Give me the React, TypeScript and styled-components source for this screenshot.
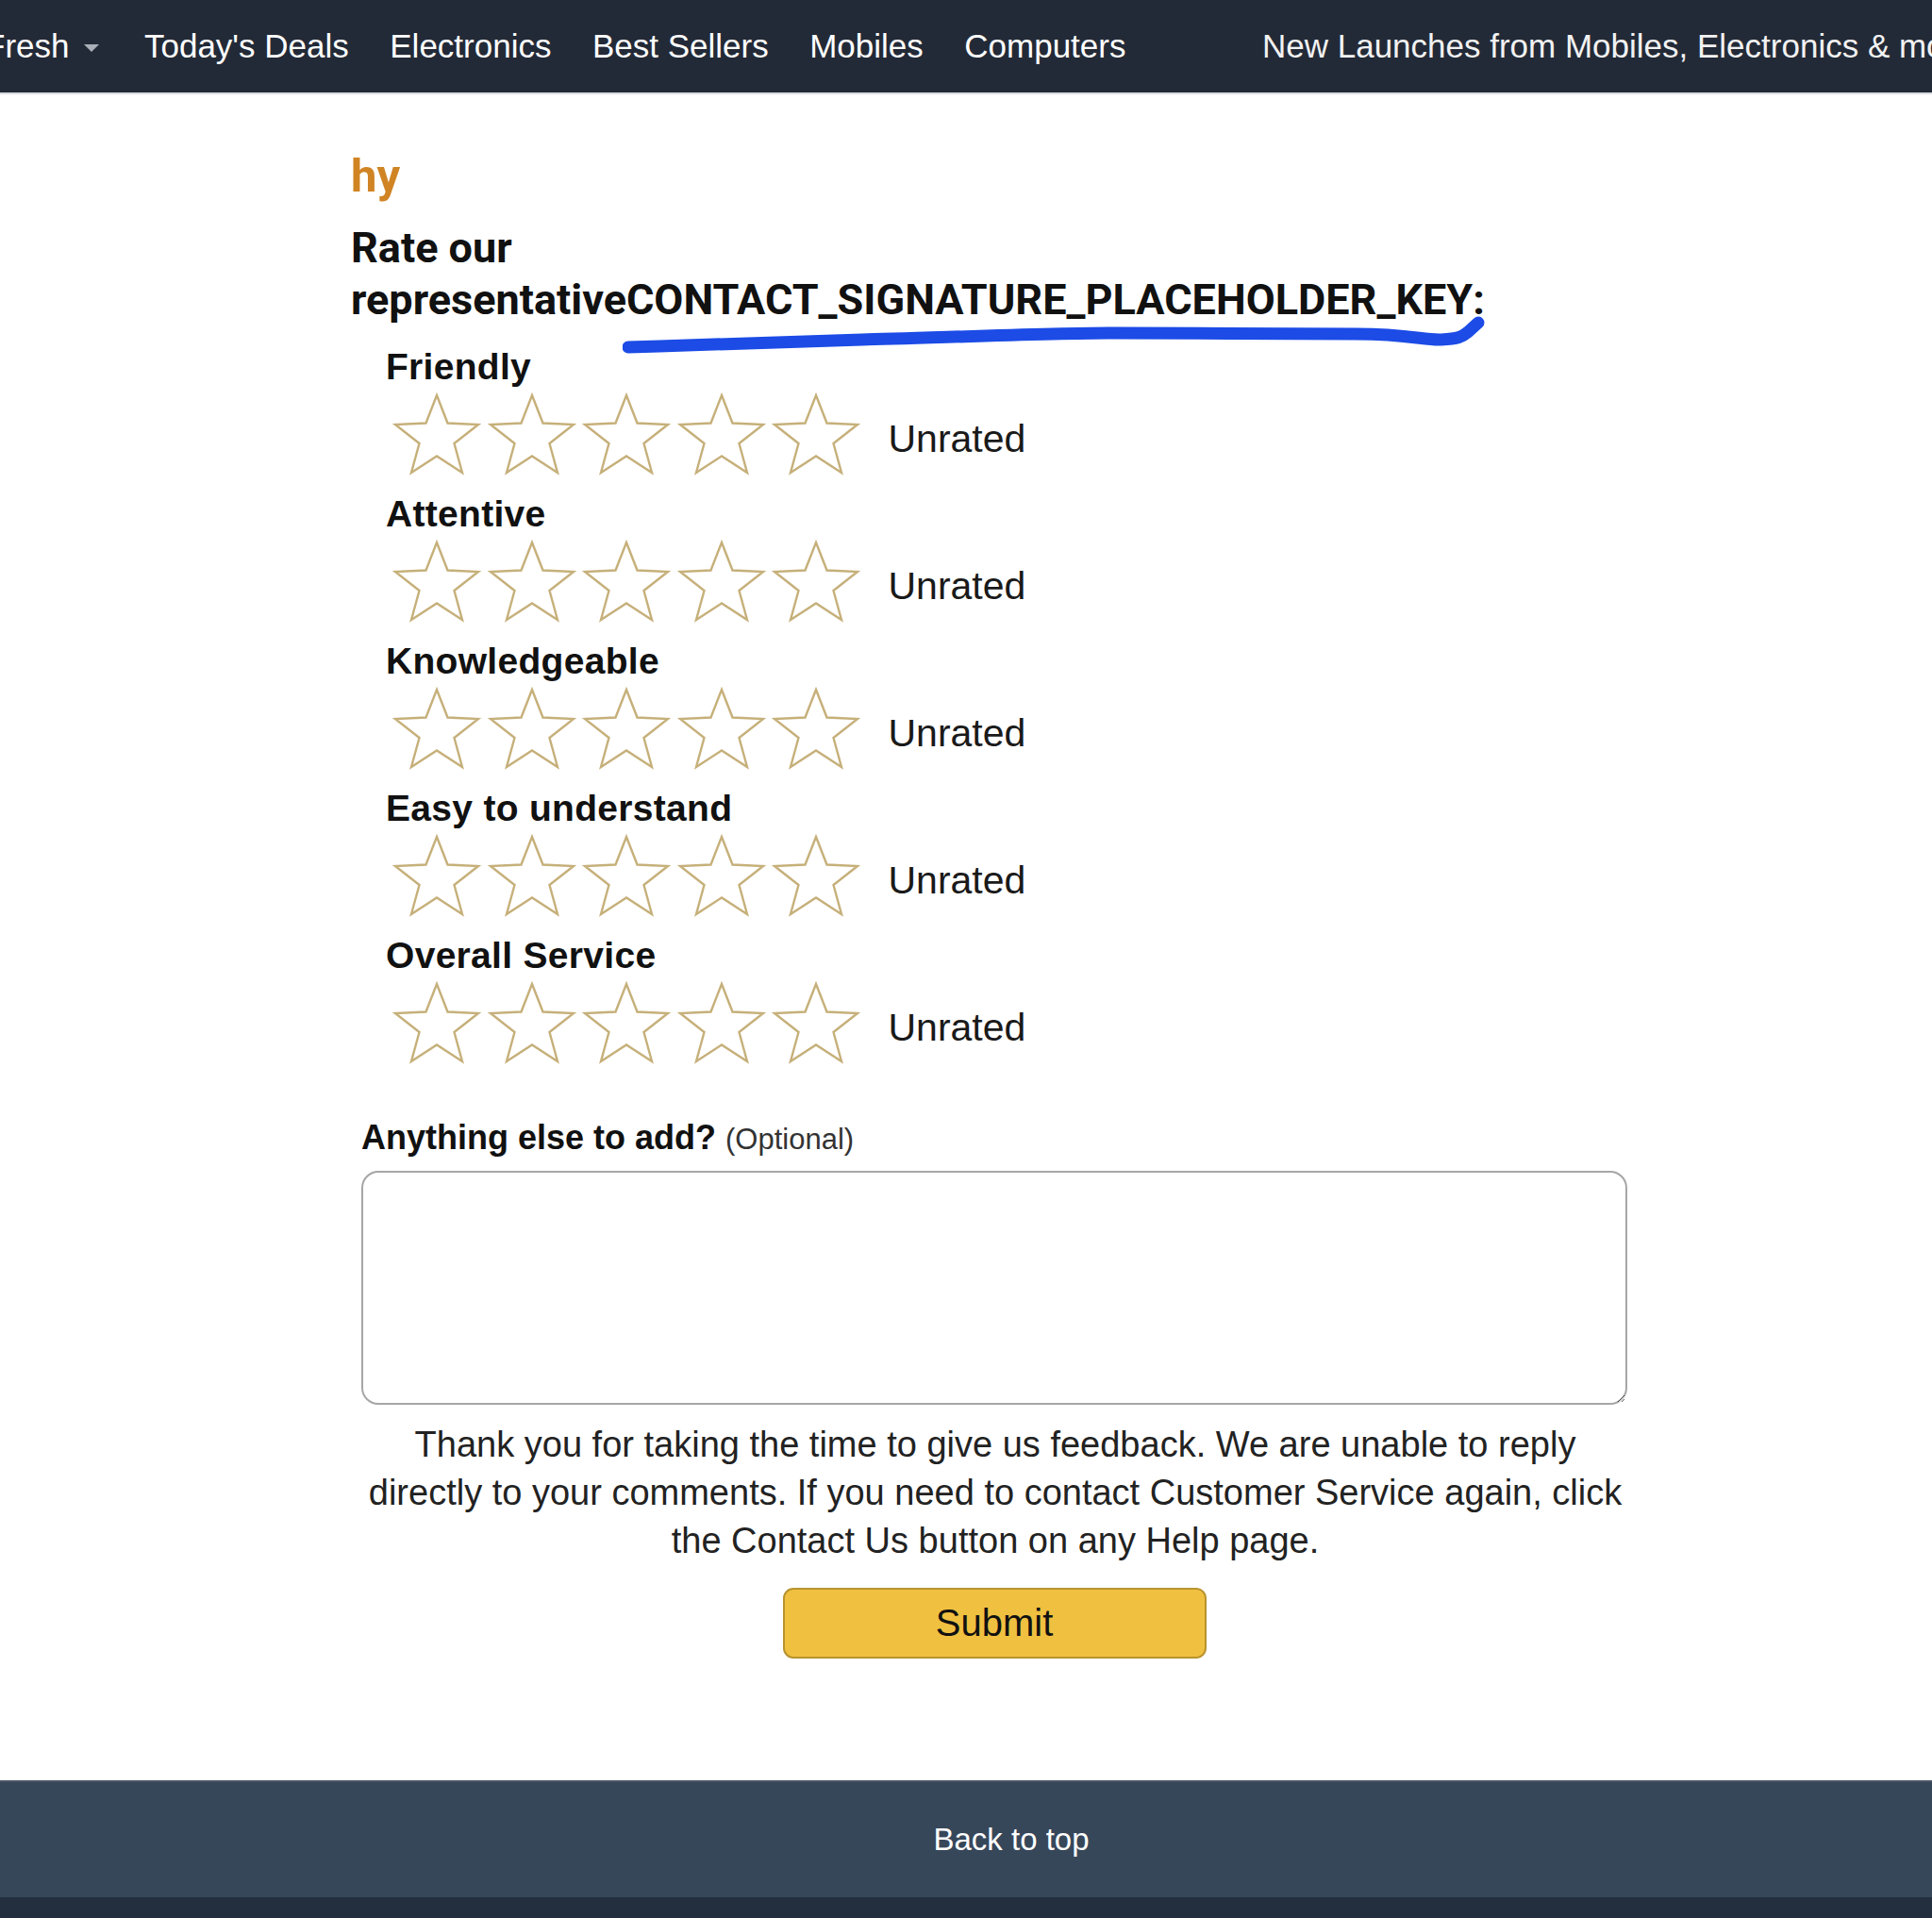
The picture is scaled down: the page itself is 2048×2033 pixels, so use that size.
import React, { FC } from "react";
import styled, { createGlobalStyle } from "styled-components";

const colors = {
  navBg: "#232a37",
  footerBg: "#37475a",
  footerBottom: "#232f3e",
  orange: "#d08424",
  star: "#c6b07a",
  text: "#111111",
  button: "#f0c040",
  buttonBorder: "#b8932e",
  scribble: "#1c4be6",
};

const GlobalStyle = createGlobalStyle`
  html, body {
    margin: 0;
    padding: 0;
    background: #ffffff;
  }
  body {
    font-family: "Liberation Sans", Arial, sans-serif;
    color: ${colors.text};
  }
`;

const Page = styled.div`
  display: flex;
  flex-direction: column;
  min-height: 2033px;
  width: 2048px;
  overflow: hidden;
`;

const NavBar = styled.nav`
  display: flex;
  align-items: center;
  gap: 43.5px;
  height: 98px;
  background: ${colors.navBg};
  border-bottom: 2px solid #d9dde2;
  overflow: hidden;
  white-space: nowrap;
`;

const NavItem = styled.a<{ $first?: boolean }>`
  display: flex;
  align-items: center;
  gap: 16px;
  flex-shrink: 0;
  font-size: 35px;
  color: #ffffff;
  text-decoration: none;
  margin-left: ${(p) => (p.$first ? "-16px" : "0")};
  margin-right: ${(p) => (p.$first ? "4px" : "0")};
`;

const Caret = styled.span`
  width: 0;
  height: 0;
  border-left: 8px solid transparent;
  border-right: 8px solid transparent;
  border-top: 8px solid #a9b0b8;
  margin-top: 4px;
`;

const Promo = styled.span`
  flex-shrink: 0;
  margin-left: 101px;
  font-size: 35px;
  color: #f2f2f2;
`;

const Main = styled.main`
  flex: 1;
  padding-top: 59px;
`;

const Content = styled.div`
  position: relative;
  margin-left: 372px;
  width: 1353px;
`;

const Greeting = styled.h2`
  margin: 0;
  font-family: Roboto, "Liberation Sans", sans-serif;
  font-size: 49px;
  line-height: 56px;
  font-weight: 700;
  color: ${colors.orange};
`;

const Heading = styled.h1`
  margin: 20px 0 0;
  font-family: Roboto, "Liberation Sans", sans-serif;
  font-size: 45px;
  line-height: 55px;
  font-weight: 700;
  color: #111;
`;

const Scribble = styled.svg`
  position: absolute;
  left: 288px;
  top: 176px;
  width: 930px;
  height: 50px;
  pointer-events: none;
`;

const RatingList = styled.div`
  margin-top: 21px;
  padding-left: 37px;
`;

const RatingBlock = styled.div`
  display: flex;
  flex-direction: column;
  height: 156px;
`;

const RatingLabel = styled.div`
  font-size: 39px;
  line-height: 46px;
  font-weight: 700;
  letter-spacing: 0.3px;
`;

const StarRow = styled.div`
  display: flex;
  align-items: center;
  gap: 4.5px;
  height: 96px;
  padding-left: 6px;
`;

const StarIcon = styled.svg`
  width: 96px;
  height: 88px;
  flex-shrink: 0;
`;

const Unrated = styled.span`
  margin: 11px 0 0 24px;
  font-size: 41px;
  color: #1a1a1a;
`;

const CommentSection = styled.div`
  margin-top: 39px;
  padding-left: 11px;
`;

const CommentLabel = styled.label`
  display: block;
  font-size: 36px;
  line-height: 42px;
  font-weight: 700;
`;

const Optional = styled.span`
  font-size: 31px;
  font-weight: 400;
  color: #333;
`;

const CommentBox = styled.textarea`
  display: block;
  box-sizing: border-box;
  width: 1342px;
  height: 248px;
  margin-top: 12px;
  border: 2px solid #a6a6a6;
  border-radius: 18px;
  background: #fff;
  font-family: inherit;
  font-size: 30px;
  padding: 12px 16px;
  outline: none;
`;

const ThankYou = styled.p`
  width: 1344px;
  margin: 17px 0 0;
  font-size: 38px;
  line-height: 51px;
  text-align: center;
  color: #222;
`;

const ButtonRow = styled.div`
  display: flex;
  justify-content: center;
  width: 1342px;
  margin-top: 24px;
  padding-right: 24px;
`;

const SubmitButton = styled.button`
  width: 449px;
  height: 75px;
  background: ${colors.button};
  border: 2px solid ${colors.buttonBorder};
  border-radius: 11px;
  font-family: "Liberation Sans", Arial, sans-serif;
  font-size: 40px;
  color: #111;
  cursor: pointer;
`;

const Footer = styled.footer`
  display: flex;
  flex-direction: column;
`;

const BackToTop = styled.div`
  display: flex;
  align-items: center;
  justify-content: center;
  height: 122px;
  padding-left: 96px;
  background: ${colors.footerBg};
  border-top: 2px solid #4b5766;
  font-size: 33px;
  color: #ffffff;
`;

const FooterBase = styled.div`
  height: 22px;
  background: ${colors.footerBottom};
`;

const STAR_POINTS =
  "48,3 59.5,32.5 92,34 66.5,54 75,85 48,67.5 21,85 29.5,54 4,34 36.5,32.5";

const Star: FC = () => (
  <StarIcon viewBox="0 0 96 88">
    <polygon
      points={STAR_POINTS}
      fill="#fff"
      stroke={colors.star}
      strokeWidth={2.4}
      strokeLinejoin="miter"
    />
  </StarIcon>
);

const navLinks = ["Today's Deals", "Electronics", "Best Sellers", "Mobiles", "Computers"];

const categories = [
  "Friendly",
  "Attentive",
  "Knowledgeable",
  "Easy to understand",
  "Overall Service",
];

const App: FC = () => {
  return (
    <>
      <GlobalStyle />
      <Page>
        <NavBar>
          <NavItem $first>
            Fresh <Caret />
          </NavItem>
          {navLinks.map((l) => (
            <NavItem key={l}>{l}</NavItem>
          ))}
          <Promo>New Launches from Mobiles, Electronics &amp; more</Promo>
        </NavBar>

        <Main>
          <Content>
            <Greeting>hy</Greeting>
            <Heading>
              Rate our representativeCONTACT_SIGNATURE_PLACEHOLDER_KEY:
            </Heading>
            {/* hand-drawn pen mark over the screenshot */}
            <Scribble viewBox="0 0 930 50">
              <path
                d="M6 33 C 100 30, 200 26, 254 25 S 450 18, 515 18 S 720 19, 777 19 S 850 26, 868 25 S 890 22, 896 17 L 907 7"
                fill="none"
                stroke={colors.scribble}
                strokeWidth={13}
                strokeLinecap="round"
                strokeLinejoin="round"
              />
            </Scribble>

            <RatingList>
              {categories.map((c) => (
                <RatingBlock key={c}>
                  <RatingLabel>{c}</RatingLabel>
                  <StarRow>
                    {[0, 1, 2, 3, 4].map((i) => (
                      <Star key={i} />
                    ))}
                    <Unrated>Unrated</Unrated>
                  </StarRow>
                </RatingBlock>
              ))}
            </RatingList>

            <CommentSection>
              <CommentLabel>
                Anything else to add? <Optional>(Optional)</Optional>
              </CommentLabel>
              <CommentBox />
              <ThankYou>
                Thank you for taking the time to give us feedback. We are unable
                to reply directly to your comments. If you need to contact
                Customer Service again, click the Contact Us button on any Help
                page.
              </ThankYou>
              <ButtonRow>
                <SubmitButton>Submit</SubmitButton>
              </ButtonRow>
            </CommentSection>
          </Content>
        </Main>

        <Footer>
          <BackToTop>Back to top</BackToTop>
          <FooterBase />
        </Footer>
      </Page>
    </>
  );
};

export default App;
